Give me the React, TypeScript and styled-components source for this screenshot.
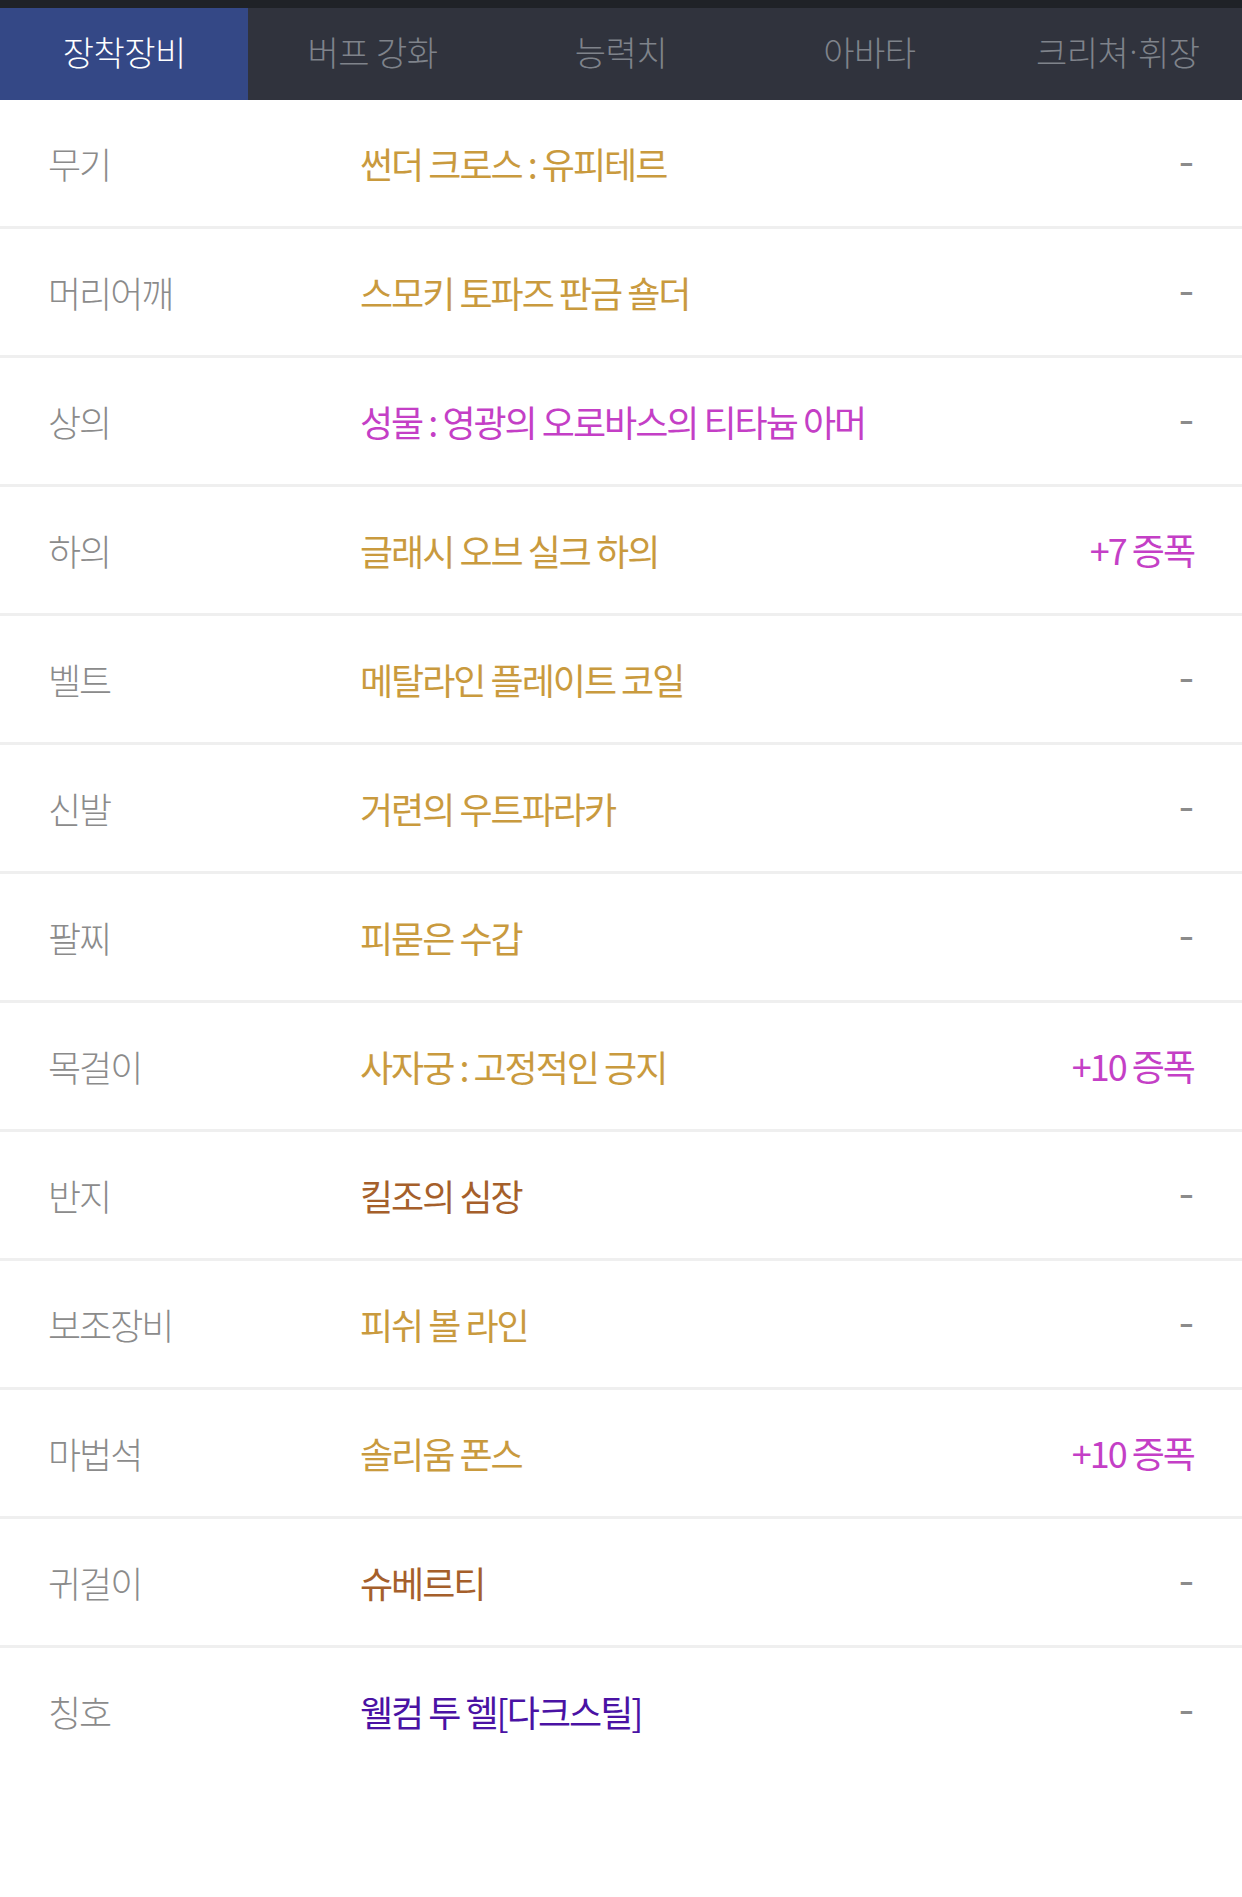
import React, { useState } from 'react';
import styled, { createGlobalStyle } from 'styled-components';

const GlobalStyle = createGlobalStyle`
  html, body {
    margin: 0;
    padding: 0;
    background: #ffffff;
  }
  body {
    font-family: "Noto Sans CJK KR", "Noto Sans", sans-serif;
  }
`;

const Page = styled.div`
  width: 1242px;
  min-height: 1897px;
  background: #ffffff;
`;

const TopStrip = styled.div`
  height: 8px;
  background: #1f2227;
`;

const TabBar = styled.div`
  display: grid;
  grid-template-columns: repeat(5, 1fr);
  height: 92px;
  background: #30333d;
`;

const Tab = styled.div<{ $active?: boolean }>`
  display: flex;
  align-items: center;
  justify-content: center;
  padding-bottom: 6px;
  background: ${(p) => (p.$active ? '#344886' : 'transparent')};
  color: ${(p) => (p.$active ? '#ffffff' : '#7f838b')};
  font-size: 34px;
  font-weight: 300;
  letter-spacing: -0.5px;
  cursor: pointer;
`;

const Dot = styled.span`
  font-family: "Noto Sans", sans-serif;
  margin: 0 1px;
`;

const List = styled.div`
  display: flex;
  flex-direction: column;
`;

const Row = styled.div`
  display: grid;
  grid-template-columns: 312px 1fr auto;
  align-items: center;
  height: 126px;
  padding: 0 48px;
  border-bottom: 3px solid #efefef;

  &:last-child {
    border-bottom: none;
  }
`;

const Label = styled.div`
  font-size: 36px;
  font-weight: 300;
  color: #8b8b8b;
  letter-spacing: -2px;
`;

const ItemName = styled.div<{ $color: string }>`
  font-size: 36px;
  font-weight: 400;
  color: ${(p) => p.$color};
  letter-spacing: -2px;
`;

const Extra = styled.div<{ $star?: boolean }>`
  font-size: ${(p) => (p.$star ? '36px' : '44px')};
  font-weight: 400;
  color: ${(p) => (p.$star ? '#c43fc6' : '#8b8b8b')};
  letter-spacing: ${(p) => (p.$star ? '-2px' : '0')};
  line-height: 1.2;
  padding-bottom: ${(p) => (p.$star ? '0' : '10px')};
  text-align: right;
`;

const GOLD = '#c99a3e';
const MAGENTA = '#c43fc6';
const BROWN = '#a55f2b';
const VIOLET = '#4a12a4';

interface Equip {
  slot: string;
  name: string;
  color: string;
  star?: string;
}

const equips: Equip[] = [
  { slot: '무기', name: '썬더 크로스 : 유피테르', color: GOLD },
  { slot: '머리어깨', name: '스모키 토파즈 판금 숄더', color: GOLD },
  { slot: '상의', name: '성물 : 영광의 오로바스의 티타늄 아머', color: MAGENTA },
  { slot: '하의', name: '글래시 오브 실크 하의', color: GOLD, star: '+7 증폭' },
  { slot: '벨트', name: '메탈라인 플레이트 코일', color: GOLD },
  { slot: '신발', name: '거련의 우트파라카', color: GOLD },
  { slot: '팔찌', name: '피묻은 수갑', color: GOLD },
  { slot: '목걸이', name: '사자궁 : 고정적인 긍지', color: GOLD, star: '+10 증폭' },
  { slot: '반지', name: '킬조의 심장', color: BROWN },
  { slot: '보조장비', name: '피쉬 볼 라인', color: GOLD },
  { slot: '마법석', name: '솔리움 폰스', color: GOLD, star: '+10 증폭' },
  { slot: '귀걸이', name: '슈베르티', color: BROWN },
  { slot: '칭호', name: '웰컴 투 헬[다크스틸]', color: VIOLET },
];

const tabs = ['장착장비', '버프 강화', '능력치', '아바타', '크리쳐·휘장'];

const renderTab = (t: string) => {
  const parts = t.split('·');
  if (parts.length < 2) return t;
  return (
    <>
      {parts[0]}
      <Dot>·</Dot>
      {parts[1]}
    </>
  );
};

export default function App() {
  const [active, setActive] = useState(0);

  return (
    <Page>
      <GlobalStyle />
      <TopStrip />
      <TabBar>
        {tabs.map((t, i) => (
          <Tab key={t} $active={i === active} onClick={() => setActive(i)}>
            {renderTab(t)}
          </Tab>
        ))}
      </TabBar>
      <List>
        {equips.map((e) => (
          <Row key={e.slot}>
            <Label>{e.slot}</Label>
            <ItemName $color={e.color}>{e.name}</ItemName>
            <Extra $star={!!e.star}>{e.star ?? '-'}</Extra>
          </Row>
        ))}
      </List>
    </Page>
  );
}
